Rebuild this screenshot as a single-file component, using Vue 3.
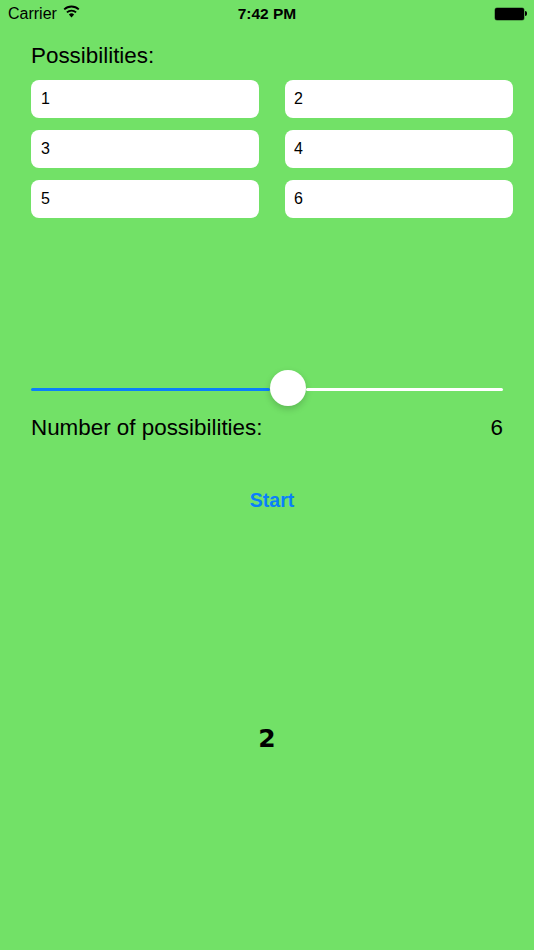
<script setup>
const options = ['1', '2', '3', '4', '5', '6']
</script>

<template>
  <div class="screen">
    <header class="status">
      <div class="status-left">
        <span>Carrier</span>
        <svg class="wifi" width="17" height="13" viewBox="0 0 17 13">
          <path d="M8.5 12.6 L5.9 9.6 A3.7 3.7 0 0 1 11.1 9.6 Z" fill="#000" />
          <path d="M3.9 7.4 A6.7 6.7 0 0 1 13.1 7.4" fill="none" stroke="#000" stroke-width="1.8" />
          <path d="M1.2 4.4 A10.6 10.6 0 0 1 15.8 4.4" fill="none" stroke="#000" stroke-width="1.8" />
        </svg>
      </div>
      <span class="time">7:42 PM</span>
      <div class="battery"><i class="cell"></i><i class="nub"></i></div>
    </header>

    <main class="content">
      <h1 class="title">Possibilities:</h1>
      <div class="fields">
        <div v-for="o in options" :key="o" class="field">{{ o }}</div>
      </div>

      <div class="slider">
        <div class="track blue"></div>
        <div class="thumb"></div>
        <div class="track white"></div>
      </div>

      <div class="count">
        <span>Number of possibilities:</span>
        <span>6</span>
      </div>

      <button class="start">Start</button>
      <div class="result">2</div>
    </main>
  </div>
</template>

<style>
html, body { margin: 0; padding: 0; background: #72e167; }
</style>

<style scoped>
.screen {
  width: 534px;
  height: 950px;
  background: #72e167;
  color: #000;
  font-family: "Liberation Sans", Arial, sans-serif;
  overflow: hidden;
}
.status {
  height: 27px;
  display: grid;
  grid-template-columns: 1fr auto 1fr;
  align-items: center;
  padding: 0 8px;
  font-size: 16px;
}
.status-left { display: flex; align-items: center; gap: 6px; }
.wifi { margin-top: -4px; }
.time { font-weight: 700; font-size: 15.5px; }
.battery { justify-self: end; display: flex; align-items: center; margin-right: -1px; }
.cell {
  display: block;
  width: 29px;
  height: 12px;
  background: #000;
  border-radius: 2px;
  box-shadow: 0 0 0 0.5px rgba(0, 0, 0, 0.5);
}
.nub { display: block; width: 2px; height: 5px; background: #000; border-radius: 0 2px 2px 0; margin-left: 1px; }
.content { padding: 0 21px 0 31px; }
.title {
  margin: 15px 0 0;
  font-size: 22.4px;
  line-height: 27px;
  font-weight: 400;
}
.fields {
  margin-top: 10.5px;
  display: grid;
  grid-template-columns: 228px 228px;
  column-gap: 26px;
  row-gap: 12.25px;
}
.field {
  height: 38px;
  line-height: 38px;
  background: #fff;
  border-radius: 8px;
  padding-left: 10px;
  font-size: 16px;
}
.field:nth-child(even) { padding-left: 9px; }
.slider {
  margin-top: 152px;
  width: 472px;
  height: 36px;
  display: flex;
  align-items: center;
}
.track { height: 3px; border-radius: 2px; margin-top: 3px; }
.blue { width: 239px; background: #0a7ffb; }
.white { flex: 1; background: #fff; }
.thumb {
  width: 36px;
  height: 36px;
  flex: none;
  border-radius: 50%;
  background: #fff;
  box-shadow: 0 3px 7px rgba(0, 0, 0, 0.18);
}
.count {
  margin-top: 8px;
  width: 472px;
  display: flex;
  justify-content: space-between;
  font-size: 22.4px;
  line-height: 27px;
}
.start {
  display: block;
  width: 482px;
  margin: 47px 0 0;
  padding: 0;
  border: 0;
  background: none;
  color: #0a7ffb;
  font: 700 19.5px/24px "Liberation Sans", Arial, sans-serif;
  text-align: center;
}
.result {
  margin: 213px 0 0 -31px;
  width: 534px;
  text-align: center;
  font: 700 25px/28px "DejaVu Sans", sans-serif;
}
</style>
